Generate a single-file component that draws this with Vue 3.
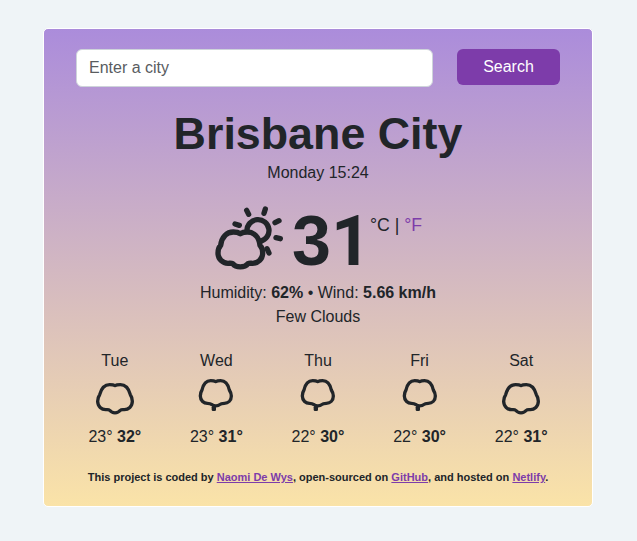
<script setup>
const days = [
  { name: 'Tue', min: 23, max: 32, icon: 'cloud' },
  { name: 'Wed', min: 23, max: 31, icon: 'drop' },
  { name: 'Thu', min: 22, max: 30, icon: 'drop' },
  { name: 'Fri', min: 22, max: 30, icon: 'drop' },
  { name: 'Sat', min: 22, max: 31, icon: 'cloud' },
]
</script>

<template>
  <main class="card">
    <form class="search" @submit.prevent>
      <input class="field" type="text" placeholder="Enter a city" />
      <button class="button" type="submit">Search</button>
    </form>
    <h1 class="city">Brisbane City</h1>
    <div class="line">Monday 15:24</div>
    <div class="current">
      <svg class="main-icon" viewBox="39 20 216 216">
        <path d="M121 115C115 111 108 110 100 110C80 110 65 125 62 150C56 157 54 165 54 173C54 191 68 204 84 204C90 204 94 203 98 205C108 218 134 218 144 205C148 203 152 204 158 204C174 204 188 191 188 173C188 165 186 157 180 150C177 125 162 110 142 110C134 110 127 111 121 115Z" />
        <path d="M141 106A33 33 0 1 1 181 138" />
        <path d="M140 45l6 12M196 41l-4 13M225 82l12-6M228 127l13 3M105 86l13 4M201 160l6 13" />
      </svg>
      <strong class="degrees">3<span class="one">1</span></strong>
      <span class="units">°C | <a class="link plain">°F</a></span>
    </div>
    <div class="line">Humidity: <b>62%</b> • Wind: <b>5.66 km/h</b></div>
    <div class="line">Few Clouds</div>
    <section class="forecast">
      <div v-for="day in days" :key="day.name" class="day">
        <div class="line">{{ day.name }}</div>
        <svg v-if="day.icon === 'cloud'" class="day-icon" viewBox="60 98 120 120">
          <path d="M120 121C115 118 109 118 104 118C88 118 79 129 74 148C69 155 68 161 68 168C68 184 80 193 92 193C97 193 101 192 104 195C112 205 128 205 136 195C139 192 143 193 148 193C160 193 172 184 172 168C172 161 171 155 166 148C161 129 152 118 136 118C131 118 125 118 120 121Z" />
        </svg>
        <svg v-else class="day-icon" viewBox="364 98 120 120">
          <path d="M423 109C418 106 413 106 408 106C394 106 386 116 382 134C378 140 377 146 377 152C377 166 388 174 398 174C404 174 408 175 412 178C417 183 430 183 435 178C439 174 443 174 449 174C460 174 470 166 470 152C470 146 468 140 464 134C460 116 452 106 438 106C433 106 428 106 423 109Z" />
          <rect class="bead" x="411" y="182" width="13" height="15" rx="4" />
        </svg>
        <div class="line">{{ day.min }}° <b>{{ day.max }}°</b></div>
      </div>
    </section>
    <footer class="credit">
      This project is coded by <a class="link">Naomi De Wys</a>, open-sourced on
      <a class="link">GitHub</a>, and hosted on <a class="link">Netlify</a>.
    </footer>
  </main>
</template>

<style>
body {
  background: #eff4f7;
}
</style>

<style scoped>
.card {
  box-sizing: border-box;
  width: 550px;
  height: 479px;
  margin: 28px 0 0 43px;
  padding: 20px 32px 0;
  border: 1px solid #fff;
  border-radius: 5px;
  background: linear-gradient(#ab8cdb, #fae3a8);
  color: #212529;
  font: 16px/24px "Liberation Sans", Arial, sans-serif;
  text-align: center;
}
.search {
  display: grid;
  grid-template-columns: 357px 103px;
  gap: 24px;
  align-items: start;
}
.field {
  box-sizing: border-box;
  width: 100%;
  height: 38px;
  padding: 6px 12px;
  border: 1px solid #ced4da;
  border-radius: 6px;
  background: #fff;
  font: inherit;
}
.field::placeholder {
  color: #595c5f;
  opacity: 1;
}
.button {
  height: 36px;
  padding: 0;
  border: 0;
  border-radius: 6px;
  background: #7d3caa;
  color: #fff;
  font: inherit;
}
.city {
  margin: 19px 0 0;
  padding-bottom: 1px;
  font-size: 44.8px;
  line-height: 54px;
  font-weight: 700;
}
.current {
  display: flex;
  height: 96px;
  padding-left: 137px;
}
.main-icon {
  width: 72px;
  height: 72px;
  margin-top: 17px;
  flex: none;
}
.main-icon path {
  fill: none;
  stroke: #212529;
  stroke-width: 16;
  stroke-linecap: round;
  stroke-linejoin: round;
}
.degrees {
  display: flex;
  margin: 16px 0 0 7px;
  font-size: 70px;
  line-height: 80px;
}
.one {
  width: 39px;
  font-family: Roboto, "Liberation Sans", sans-serif;
  text-align: left;
}
.units {
  margin: 28px 0 0 0;
  font-size: 17.7px;
  white-space: nowrap;
}
.link {
  color: #7d3caa;
  text-decoration: underline;
}
.plain {
  text-decoration: none;
}
.forecast {
  display: grid;
  grid-template-columns: repeat(5, 1fr);
  margin: 20px -12px 0;
}
.day-icon {
  display: block;
  width: 40px;
  height: 40px;
  margin: 5px auto 7px;
}
.day-icon path {
  fill: none;
  stroke: #212529;
  stroke-width: 10;
  stroke-linejoin: round;
}
.bead {
  fill: #212529;
}
.credit {
  margin: 20px -10px 0;
  font-size: 11px;
  line-height: 16px;
  font-weight: 700;
}
</style>
